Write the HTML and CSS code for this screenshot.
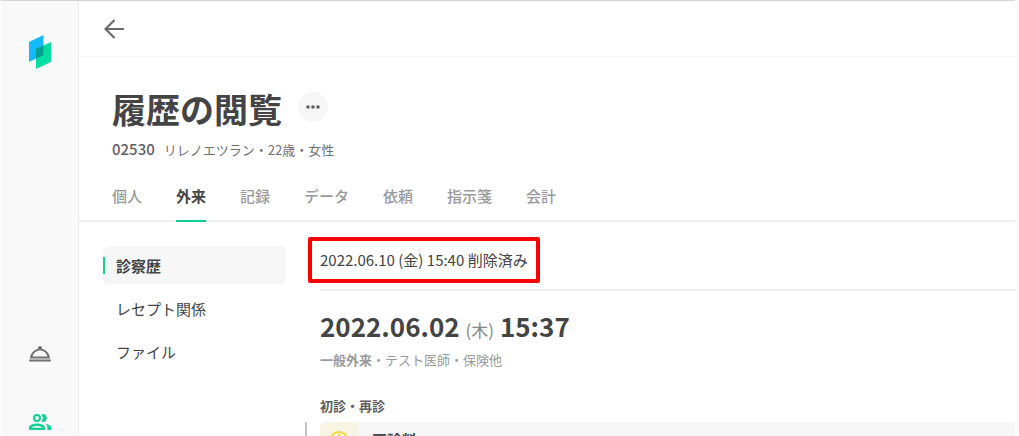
FILE: index.html
```html
<!DOCTYPE html>
<html lang="ja">

<head>
    <meta charset="utf-8">
    <title>履歴の閲覧</title>
    <link rel="stylesheet" href="styles.css">
</head>

<body>
    <div class="app">
        <nav class="sidebar">
            <a href="#" class="logo" aria-label="ホーム">
                <svg width="22" height="34" viewBox="0 0 22 34">
                    <path d="M0 7L14.500 0V20L0 27z" fill="#14b9ff" />
                    <path d="M7 14L22 7V27L7 34z" fill="#00dfa0" />
                    <path d="M7 14L14.500 10.500V20L7 23.600z" fill="#009f96" />
                </svg>
            </a>
            <div class="side-links">
                <a href="#" class="side-link" aria-label="受付">
                    <svg width="24" height="24" viewBox="0 0 24 24" fill="currentColor">
                        <path d="M1.200 17.600h21.600v2H1.200zM13.840 6.790a2 2 0 1 0-3.680 0C6.100 7.700 2.600 11.200 1.900 16.400h20.200c-.7-5.200-4.200-8.700-8.260-9.610zM12 8.600c3.500 0 6.300 2.200 7.500 5.800h-15c1.200-3.600 4-5.800 7.500-5.800z" />
                    </svg>
                </a>
                <a href="#" class="side-link active" aria-label="患者">
                    <svg width="24" height="24" viewBox="0 0 24 24" fill="currentColor">
                        <path d="M9 13.500c-2.700 0-8 1.300-8 4V20h16v-2.500c0-2.700-5.300-4-8-4zM3.300 17.800c.8-.9 3.300-2.100 5.700-2.100s4.900 1.200 5.700 2.100zM9 12a4 4 0 1 0 0-8 4 4 0 0 0 0 8zm0-5.900a1.900 1.900 0 1 1 0 3.800 1.900 1.900 0 0 1 0-3.800zM14.700 12a4 4 0 1 0 0-8c-.5 0-.9.1-1.300.2a6 6 0 0 1 0 7.600c.4.100.8.200 1.300.2zM17.300 13.800c1.300.9 2.100 2.100 2.100 3.700V20H23v-2.500c0-2-2.900-3.200-5.700-3.700z" />
                    </svg>
                </a>
            </div>
        </nav>

        <main class="main">
            <header class="topbar">
                <button type="button" class="back" aria-label="戻る">
                    <svg width="20" height="20" viewBox="0 0 20 20" fill="none" stroke="currentColor" stroke-width="2.200">
                        <path d="M20 10H1.500M10.500 1L1.500 10l9 9" />
                    </svg>
                </button>
            </header>

            <section class="patient">
                <div class="title-row">
                    <h1>履歴の閲覧</h1>
                    <button type="button" class="more" aria-label="メニュー">
                        <svg width="16" height="4" viewBox="0 0 16 4" fill="currentColor">
                            <circle cx="3" cy="2" r="1.800" />
                            <circle cx="8" cy="2" r="1.800" />
                            <circle cx="13" cy="2" r="1.800" />
                        </svg>
                    </button>
                </div>
                <p class="info"><span class="number">02530</span>リレノエツラン・22歳・女性</p>
            </section>

            <nav class="tabs">
                <a href="#">個人</a>
                <a href="#" class="active">外来</a>
                <a href="#">記録</a>
                <a href="#">データ</a>
                <a href="#">依頼</a>
                <a href="#">指示箋</a>
                <a href="#">会計</a>
            </nav>

            <div class="columns">
                <nav class="submenu">
                    <a href="#" class="active">診察歴</a>
                    <a href="#">レセプト関係</a>
                    <a href="#">ファイル</a>
                </nav>

                <section class="history">
                    <div class="deleted">
                        <span class="marked">2022.06.10 (金) 15:40 削除済み</span>
                    </div>
                    <article class="visit">
                        <h2>2022.06.02 <span class="weekday">(木)</span> 15:37</h2>
                        <p class="visit-info"><b>一般外来</b>・テスト医師・保険他</p>
                        <h3>初診・再診</h3>
                        <div class="order">
                            <div class="order-icon">
                                <svg width="22" height="22" viewBox="0 0 22 22" fill="none" stroke="#f5d835" stroke-width="2">
                                    <circle cx="11" cy="11" r="9" />
                                    <path d="M11 4v13M7.500 12h7" />
                                </svg>
                            </div>
                            <div class="order-name">再診料</div>
                        </div>
                    </article>
                </section>
            </div>
        </main>
    </div>
</body>

</html>
```
FILE: styles.css
```css
* {
    box-sizing: border-box;
}

body {
    margin: 0;
    padding: 0 4px 0 1px;
    background: #fff;
    color: #444;
    font-family: "Noto Sans CJK JP", sans-serif;
    font-size: 15px;
    line-height: 24px;
}

h1,
h2,
h3,
p {
    margin: 0;
}

a {
    color: inherit;
    text-decoration: none;
}

button {
    padding: 0;
    border: 0;
    background: none;
    cursor: pointer;
}

svg {
    display: block;
}

.app {
    display: flex;
    height: 100vh;
    overflow: hidden;
    border-top: 1px solid #d4d4d4;
}

.sidebar {
    flex: none;
    display: flex;
    flex-direction: column;
    align-items: center;
    justify-content: space-between;
    width: 78px;
    padding: 34px 0 2px;
    border-right: 1px solid #ececec;
    background: #f9f9f9;
}

.side-links {
    display: flex;
    flex-direction: column;
    gap: 44px;
}

.side-link {
    color: #707070;
}

.side-link.active {
    color: #10cf92;
}

.main {
    flex: 1;
    min-width: 0;
}

.topbar {
    display: flex;
    align-items: center;
    height: 56px;
    padding-left: 25px;
    border-bottom: 1px solid #f5f5f5;
}

.back {
    color: #6a6a6a;
}

.patient {
    padding: 28px 33px 0;
}

.title-row {
    display: flex;
    align-items: center;
    gap: 16px;
}

h1 {
    font-size: 34px;
    line-height: 48px;
}

.more {
    display: flex;
    align-items: center;
    justify-content: center;
    width: 30px;
    height: 30px;
    margin-top: -4px;
    border-radius: 50%;
    background: #f6f6f6;
    color: #606060;
}

.info {
    margin-top: 4px;
    color: #707070;
    font-size: 13px;
}

.number {
    margin-right: 9px;
    color: #606060;
    font-size: 15px;
    font-weight: 500;
}

.tabs {
    display: flex;
    gap: 34px;
    padding: 22px 33px 0;
    border-bottom: 2px solid #eee;
    color: #999;
    font-weight: 500;
}

.tabs a {
    height: 38px;
    margin-bottom: -2px;
}

.tabs .active {
    border-bottom: 2px solid #10cf92;
    color: #444;
    font-weight: 700;
}

.columns {
    display: flex;
    gap: 34px;
}

.submenu {
    flex: none;
    display: flex;
    flex-direction: column;
    gap: 4px;
    width: 207px;
    padding: 24px 0 0 24px;
}

.submenu a {
    display: flex;
    align-items: center;
    height: 39px;
    padding-left: 13px;
    border-radius: 6px;
}

.submenu .active {
    padding-left: 0;
    background: #f6f6f6;
    font-weight: 700;
}

.submenu .active::before {
    content: "";
    width: 2px;
    height: 17px;
    margin-right: 11px;
    background: #10cf92;
}

.history {
    flex: 1;
    min-width: 0;
}

.deleted {
    padding: 15px 0 6px;
    border-bottom: 2px solid #eee;
}

.marked {
    display: inline-block;
    margin-left: -12px;
    padding: 7px 8px;
    border: 4px solid #f00;
    border-radius: 2px;
}

.visit {
    padding-top: 17px;
}

h2 {
    font-size: 26px;
    line-height: 36px;
}

.weekday {
    color: #888;
    font-size: 17px;
    font-weight: 400;
}

.visit-info {
    color: #999;
    font-size: 13px;
}

h3 {
    margin-top: 22px;
    color: #606060;
    font-size: 13px;
    line-height: 24px;
}

.order {
    display: flex;
    height: 80px;
    margin: 4px 0 0 -15px;
    border-left: 2px solid #c4c4c4;
    padding-left: 13px;
}

.order-icon {
    padding: 8px;
    border-radius: 6px 0 0 0;
    background: #f7f4e4;
}

.order-name {
    flex: 1;
    padding: 6px 14px;
    background: #f6f6f6;
    font-weight: 700;
}
```
